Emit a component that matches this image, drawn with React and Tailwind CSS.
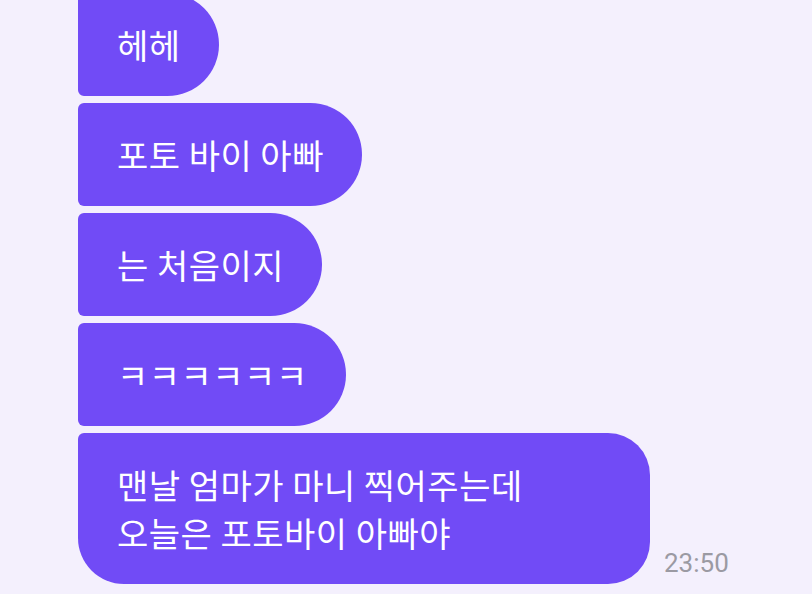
import React from 'react';

const font = { fontFamily: '"Noto Sans CJK KR", "Noto Sans", Roboto, sans-serif' };

const messages = ['헤헤', '포토 바이 아빠', '는 처음이지', 'ㅋㅋㅋㅋㅋㅋ'];

export default function App() {
  return (
    <div className="w-[812px] h-[594px] overflow-hidden bg-[#f4f0fd]" style={font}>
      <div className="flex flex-col items-start gap-[7px] pl-[78px] -mt-[7px]">
        {messages.map((m) => (
          <div
            key={m}
            className="h-[103px] flex items-center pl-[39px] pr-[38px] bg-[#714bf6] text-white text-[34px] tracking-[0.5px] leading-[48px] rounded-l-[6px] rounded-r-[52px]"
          >
            {m}
          </div>
        ))}

        {/* last bubble in group + time */}
        <div className="flex items-end">
          <div className="w-[572px] pt-[28px] pb-[27px] pl-[39px] pr-[38px] bg-[#714bf6] text-white text-[34px] tracking-[0.5px] leading-[48px] rounded-tl-[6px] rounded-tr-[42px] rounded-br-[42px] rounded-bl-[46px]">
            맨날 엄마가 마니 찍어주는데
            <br />
            오늘은 포토바이 아빠야
          </div>
          <span className="ml-[14px] mb-[8px] text-[26px] text-[#9b9aa3] leading-none" style={{ fontFamily: 'Roboto, sans-serif' }}>
            23:50
          </span>
        </div>
      </div>
    </div>
  );
}
